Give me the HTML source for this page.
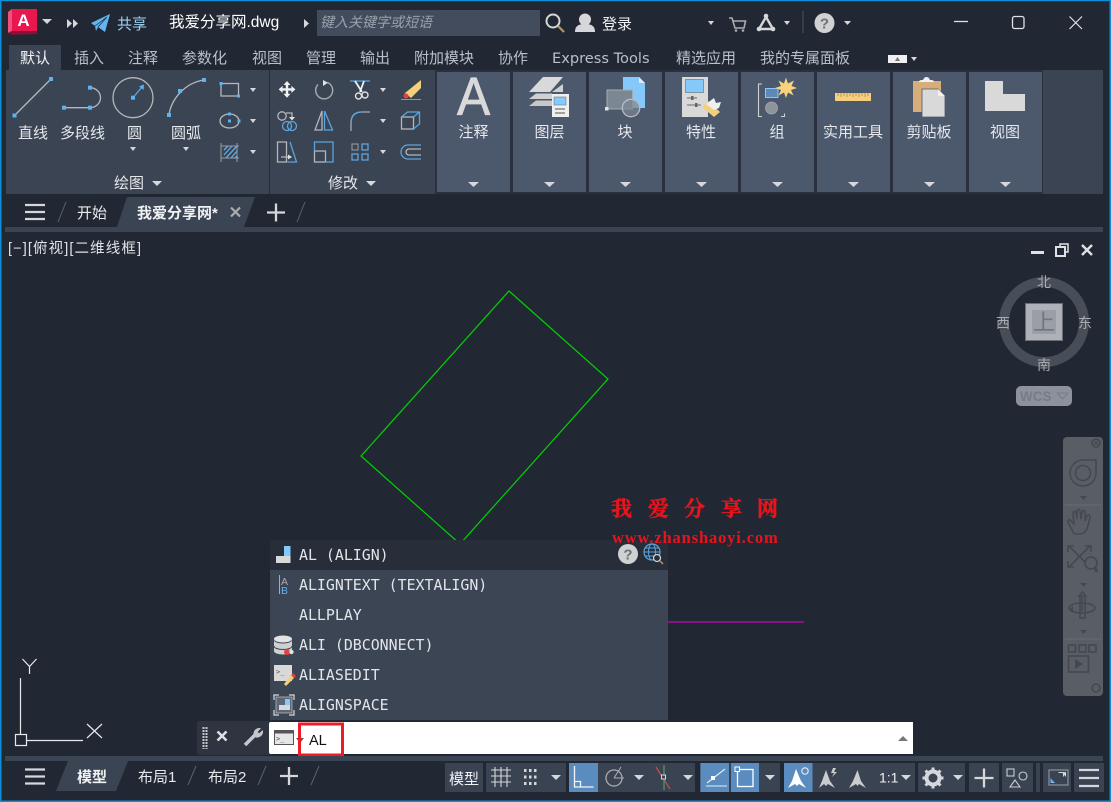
<!DOCTYPE html>
<html><head><meta charset="utf-8"><style>
html,body{margin:0;padding:0;background:#222833;width:1111px;height:802px;overflow:hidden}
svg{display:block;position:absolute;left:0;top:0}
text{font-family:"Liberation Sans","Noto Sans CJK SC",sans-serif;font-size:15px;fill:#e6e8ec}
.t{fill:#b9c0ca}
.m{font-family:"DejaVu Sans Mono","Liberation Mono",monospace;font-size:14.9px;fill:#e2e5ea}
.c{text-anchor:middle}
.g{fill:none;stroke:#b5b7ba;stroke-width:1.3}
.b{fill:none;stroke:#5aa5e0;stroke-width:1.3}
.s{fill:#5ab4f0}
.tri{fill:#d5d7da}
.bb{fill:#4c586c}
.st{fill:#3a4352}
.on{fill:#5a8cc0}
.n{fill:none;stroke:#45494f;stroke-width:1.6}
.cmp{fill:#a8abb0;font-size:14px;text-anchor:middle}
</style></head><body>
<svg width="1111" height="802" viewBox="0 0 1111 802" xmlns="http://www.w3.org/2000/svg">
<rect width="1111" height="802" fill="#222833"/>

<!-- title bar -->
<polygon points="8,12 12,9 12,31 8,33" fill="#f0507c"/>
<polygon points="8,33 12,31 37,31 37,34 12,35" fill="#8a1036"/>
<rect x="12" y="9" width="25" height="22" fill="#e8174f"/>
<text x="23.500" y="26" class="c" style="font-size:17px;font-weight:bold;fill:#fff">A</text>
<polygon class="tri" points="42,19 52,19 47,24"/>
<polygon points="67,19 72,23.500 67,28" fill="#d5d7da"/><polygon points="73,19 78,23.500 73,28" fill="#d5d7da"/>
<polygon points="91,23 110,14 105,32 98,27 96,31 95,26" fill="#5fb6f0"/><path d="M95 26l12-9-9 10" fill="none" stroke="#222833" stroke-width=".7"/>
<text x="117" y="29" style="fill:#9fd0f0">共享</text>
<text x="169" y="27" style="fill:#fff;font-size:15.500px">我爱分享网.dwg</text>
<polygon points="304,19 309,23.500 304,28" fill="#d5d7da"/>
<rect x="317" y="10" width="223" height="26" fill="#434c5d"/>
<text x="320" y="27" style="font-style:italic;fill:#9aa1ac;font-size:14px">键入关键字或短语</text>
<circle cx="553" cy="21" r="6.500" fill="none" stroke="#d5d7da" stroke-width="2"/>
<line x1="558" y1="26" x2="564" y2="32" stroke="#b8935c" stroke-width="2.200"/>
<circle cx="585" cy="19.500" r="6" fill="#d5d7da"/><path d="M575 32c0-7 5-8 10-8s10 1 10 8z" fill="#d5d7da"/>
<text x="602" y="29" style="fill:#f0f1f3">登录</text>
<polygon class="tri" points="708,21 714,21 711,25"/>
<path d="M729 18h3l3 10h9l1.500-7h-12" fill="none" stroke="#a9acb0" stroke-width="1.600"/><circle cx="736" cy="30.500" r="1.300" fill="#a9acb0"/><circle cx="743" cy="30.500" r="1.300" fill="#a9acb0"/>
<path d="M766 17l-7 12h14z" fill="none" stroke="#d5d7da" stroke-width="2.400"/><circle cx="766" cy="16" r="2.300" fill="#d5d7da"/><circle cx="759" cy="29" r="2.300" fill="#d5d7da"/><circle cx="773" cy="29" r="2.300" fill="#d5d7da"/>
<polygon class="tri" points="784,21 790,21 787,25"/>
<line x1="803" y1="11" x2="803" y2="33" stroke="#4a5260"/>
<circle cx="824.500" cy="23" r="10" fill="#d0d1d3"/><text x="824.500" y="28.500" class="c" style="fill:#6c7078;font-size:15px;font-weight:bold">?</text>
<polygon class="tri" points="844,21 851,21 847.500,25"/>
<line x1="954" y1="21.500" x2="968" y2="21.500" stroke="#e0e1e3" stroke-width="1.300"/>
<rect x="1012.500" y="16.500" width="11.500" height="12" rx="2" fill="none" stroke="#e0e1e3" stroke-width="1.300"/>
<path d="M1069.500 16.500l12.500 12.500M1082 16.500l-12.500 12.500" stroke="#e0e1e3" stroke-width="1.200"/>

<!-- ribbon tabs -->
<rect x="9" y="45" width="52" height="25" fill="#3b4453"/>
<text x="20" y="63" style="fill:#f2f4f6">默认</text>
<text x="74" y="63" class="t">插入</text>
<text x="128" y="63" class="t">注释</text>
<text x="182" y="63" class="t">参数化</text>
<text x="252" y="63" class="t">视图</text>
<text x="306" y="63" class="t">管理</text>
<text x="360" y="63" class="t">输出</text>
<text x="414" y="63" class="t">附加模块</text>
<text x="498" y="63" class="t">协作</text>
<text x="552" y="63" class="t" style="font-family:'DejaVu Sans','Liberation Sans',sans-serif;font-size:14.600px">Express Tools</text>
<text x="676" y="63" class="t">精选应用</text>
<text x="760" y="63" class="t">我的专属面板</text>
<rect x="888" y="55" width="19" height="8" fill="#f0f0f2"/><polygon points="895,61 900,61 897.500,57" fill="#777"/>
<polygon class="tri" points="911,57 917,57 914,61"/>

<!-- ribbon body -->
<rect x="6" y="70" width="1097" height="124" fill="#3b4453"/>
<line x1="269.500" y1="70" x2="269.500" y2="194" stroke="#262c38"/>
<rect x="435" y="70" width="608" height="124" fill="#2a303e"/>
<rect class="bb" x="437" y="72" width="73" height="120"/>
<rect class="bb" x="513" y="72" width="73" height="120"/>
<rect class="bb" x="589" y="72" width="73" height="120"/>
<rect class="bb" x="665" y="72" width="73" height="120"/>
<rect class="bb" x="741" y="72" width="73" height="120"/>
<rect class="bb" x="817" y="72" width="73" height="120"/>
<rect class="bb" x="893" y="72" width="73" height="120"/>
<rect class="bb" x="969" y="72" width="73" height="120"/>

<!-- draw panel -->
<line x1="15" y1="115" x2="51" y2="79" class="g"/><rect class="s" x="12.500" y="113.500" width="4" height="4"/><rect class="s" x="49" y="77" width="4" height="4"/>
<path d="M64 107.700H90A10.500 10 0 0 0 90 87.700" class="g"/><rect class="s" x="62" y="105.700" width="4" height="4"/><rect class="s" x="88" y="105.700" width="4" height="4"/><rect class="s" x="88" y="85.700" width="4" height="4"/>
<circle cx="133" cy="97.700" r="20" class="g"/><line x1="133" y1="97.700" x2="142" y2="87" class="b" stroke-width="1.500"/><polygon class="s" points="144,84.500 143.500,90 139,86.500"/><rect class="s" x="131" y="95.700" width="4" height="4"/>
<path d="M169 115C171 100 184 83 204 80" class="g"/><rect class="s" x="167" y="113" width="4" height="4"/><rect class="s" x="178" y="89" width="4" height="4"/><rect class="s" x="202" y="78" width="4" height="4"/>
<rect x="221" y="83.500" width="17.500" height="12.500" class="g"/><rect class="s" x="219.500" y="82" width="3" height="3"/><rect class="s" x="237" y="94.500" width="3" height="3"/>
<polygon class="tri" points="250,88 256,88 253,92"/>
<ellipse cx="229.500" cy="121" rx="9.500" ry="7" class="g"/><rect class="s" x="228" y="119.500" width="3" height="3"/><rect class="s" x="228" y="112.500" width="3" height="3"/><rect class="s" x="237.500" y="119.500" width="3" height="3"/>
<polygon class="tri" points="250,119 256,119 253,123"/>
<path d="M221 143v19M237 143v19M221 146h18M221 158h18" stroke="#9a9da2" fill="none"/><path d="M224 150l4-4M224 155l8-9M226 158l11-12M231 158l6-7M235 158l2-2" stroke="#62ace6" stroke-width="1.300" fill="none"/>
<polygon class="tri" points="250,150 256,150 253,154"/>
<text x="18" y="138">直线</text><text x="60" y="138">多段线</text><text x="127" y="138">圆</text><text x="171" y="138">圆弧</text>
<polygon class="tri" points="130,147 136,147 133,151"/><polygon class="tri" points="183,147 189,147 186,151"/>
<text x="114" y="188">绘图</text><polygon class="tri" points="152,181 162,181 157,186"/>

<!-- modify panel -->
<path d="M287 81l3.500 4h-2.300v3.200h3.200v-2.300l4 3.500-4 3.500v-2.300h-3.200v3.200h2.300l-3.500 4-3.500-4h2.300v-3.200h-3.200v2.300l-4-3.500 4-3.500v2.300h3.200v-3.200h-2.300z" fill="#f0f1f3"/>
<path d="M327.500 82.500A8.500 8.500 0 1 1 318 84.500" fill="none" stroke="#a9acb0" stroke-width="1.400"/><polygon points="323,80 328,82.800 323,86" fill="#e0e1e3"/>
<line x1="350" y1="81" x2="370" y2="81" stroke="#5aa5e0" stroke-width="1.300"/><path d="M355 81l7 11M364 81l-4 11" stroke="#f0f1f3" stroke-width="1.800"/><circle cx="358.500" cy="96" r="3" fill="none" stroke="#e0e1e3" stroke-width="1.400"/><circle cx="365" cy="95" r="3" fill="none" stroke="#e0e1e3" stroke-width="1.400"/>
<polygon class="tri" points="380,88 386,88 383,92"/>
<polygon points="421,80 421,88 411,98 405,93" fill="#f4cf7c"/><polygon points="405,93 408,95.500 406,97 404,96" fill="#e8e8e8"/><circle cx="406" cy="96" r="2.500" fill="#e84040"/><line x1="401" y1="99.500" x2="421" y2="99.500" stroke="#5aa5e0"/>
<circle cx="282" cy="116" r="4.200" class="g"/><path d="M286 113h6v5" class="g"/><polygon points="289,117 295,117 292,120.500" fill="#e0e1e3"/><circle cx="287" cy="126" r="4.500" class="b" stroke-width="1.500"/><circle cx="292" cy="126" r="4.500" class="b" stroke-width="1.500"/>
<polygon points="322,111 322,130 315,130" class="g"/><polygon points="324.500,111 332.500,130 324.500,130" class="b"/>
<path d="M351 131v-8q0-11 11-11h8" fill="none" stroke="#a9acb0" stroke-width="1.300"/><path d="M351 122q1-10 11-10" class="b"/>
<polygon class="tri" points="380,119 386,119 383,123"/>
<rect x="401.500" y="117" width="12" height="12" class="g" stroke-width="1.600"/><path d="M401.500 117l6-5h12v12l-6 5M413.500 117l6-5" class="b"/>
<path d="M277.500 142h9v20h-9zM281 157h9" class="g"/><polygon points="288,154.500 292,157 288,159.500" fill="#e0e1e3"/><path d="M290 142l6.500 20h-9" class="b"/>
<rect x="314.500" y="151" width="11" height="11" class="g"/><path d="M314.500 151v-9h18.500v20h-8" class="b"/>
<rect x="352" y="144" width="6" height="6" fill="none" stroke="#8e9197" stroke-width="1.200"/><rect x="362" y="144" width="6" height="6" class="b"/><rect x="352" y="154" width="6" height="6" class="b"/><rect x="362" y="154" width="6" height="6" class="b"/>
<polygon class="tri" points="380,150 386,150 383,154"/>
<path d="M421 145h-13a7 7 0 0 0 0 14h13" class="b"/><path d="M421 149h-12a3 3 0 0 0 0 6h12" class="g"/>
<text x="328" y="188">修改</text><polygon class="tri" points="366,181 376,181 371,186"/>

<!-- big buttons -->
<text transform="translate(473.500,115) scale(.92,1)" class="c" style="font-size:54px;fill:#d9d9d9;stroke:#d9d9d9;stroke-width:.8">A</text>
<polygon points="529,92 543,77 563,77 550,92" fill="#d9d9d9"/><polygon points="529,99 536,93.500 552,93.500 552,99" fill="#d0d0d0"/><polygon points="529,106 536,100.500 552,100.500 552,106" fill="#c8c8c8"/><polygon points="552,92 563,84 563,92" fill="#d0d0d0"/>
<rect x="552" y="94" width="17" height="23" fill="#efefef"/><rect x="554" y="97" width="12" height="8" fill="#85c8fa" stroke="#6a7a8a" stroke-width=".6"/><path d="M555 109h10M555 113h10" stroke="#555"/>
<polygon points="623,77 639,77 645,83 645,108 623,108" fill="#85c8fa"/><polygon points="639,77 645,83 639,83" fill="#dcecf8"/>
<rect x="607" y="90" width="25.500" height="19" fill="#7c8794" stroke="#a6abb1"/><circle cx="631" cy="108" r="8.700" fill="#7c8794" fill-opacity=".7" stroke="#b8bbc0" stroke-width="1.300"/><rect x="605" y="107" width="3.500" height="3.500" fill="#e0e1e3"/>
<rect x="682" y="77" width="26" height="40" fill="#d9d9d9"/><rect x="685.500" y="79.500" width="18" height="13" fill="#85c8fa" stroke="#6a7a8a" stroke-width=".7"/><path d="M687 98h10M687 105h14" stroke="#666"/><rect x="691" y="96" width="2.500" height="4" fill="#666"/><rect x="695" y="103" width="2.500" height="4" fill="#666"/>
<polygon points="702,107 708,101 720,112 714,117" fill="#f4cf7c"/><polygon points="706,104 714,98 716,103 721,102 719,108 714,110" fill="#efefef"/>
<path d="M762 84h-3.500v32.500h3.500M781 116.500h3.500v-3" fill="none" stroke="#d0d1d3" stroke-width="1.100"/>
<rect x="765.500" y="88.500" width="12.500" height="9" fill="#5f88b5" stroke="#85c8fa"/>
<circle cx="771.500" cy="108" r="6" fill="#8e949c" stroke="#aab" stroke-width=".7"/>
<polygon points="786,77.500 788,83.500 794,80.500 791.500,86 797,88 791,90 793.500,95.500 788,92.500 786,98 784,92.500 778.500,95.500 781,90 775,88 781,86 778.500,80.500 784,83.500" fill="#f8d27c"/>
<rect x="835" y="93" width="36" height="8" fill="#f5cf7d"/><path d="M838 93v3M841 93v4M844 93v3M847 93v4M850 93v3M853 93v4M856 93v3M859 93v4M862 93v3M865 93v4M868 93v3" stroke="#a98a4a" stroke-width=".8"/>
<rect x="913" y="81" width="28" height="31" fill="#d7ae78"/><path d="M919 82q0-2 3-2h1q1-3 3.500-3t3.500 3h1q3 0 3 2z" fill="#f2f2f2"/><polygon points="922,89 938,89 945,96 945,117 922,117" fill="#d9d9d9" stroke="#4c586c" stroke-width=".8"/><polygon points="938,89 945,96 938,96" fill="#f2f2f2"/>
<polygon points="985,81 1003,81 1003,94 1025,94 1025,111 985,111" fill="#d9d9d9"/>
<text x="473.500" y="137" class="c">注释</text><text x="549.500" y="137" class="c">图层</text><text x="625" y="137" class="c">块</text><text x="701" y="137" class="c">特性</text><text x="777" y="137" class="c">组</text><text x="853" y="137" class="c">实用工具</text><text x="929" y="137" class="c">剪贴板</text><text x="1005" y="137" class="c">视图</text>
<polygon class="tri" points="468,182 479,182 473.500,187"/><polygon class="tri" points="544,182 555,182 549.500,187"/><polygon class="tri" points="620,182 631,182 625.500,187"/><polygon class="tri" points="696,182 707,182 701.500,187"/><polygon class="tri" points="772,182 783,182 777.500,187"/><polygon class="tri" points="848,182 859,182 853.500,187"/><polygon class="tri" points="924,182 935,182 929.500,187"/><polygon class="tri" points="1000,182 1011,182 1005.500,187"/>

<!-- doc tabs -->
<path d="M25 205h20M25 212h20M25 219h20" stroke="#d5d7da" stroke-width="2.300"/>
<line x1="58" y1="222" x2="66" y2="202" stroke="#5a6270"/>
<text x="77" y="218">开始</text>
<polygon points="127,197 255,197 244,227 117,227" fill="#3b4453"/>
<text x="137" y="218" style="font-weight:bold;fill:#f0f1f3">我爱分享网*</text>
<path d="M231 207.500l9 9M240 207.500l-9 9" stroke="#a9acb0" stroke-width="2.200"/>
<path d="M267 212.500h18M276 203.500v18" stroke="#d5d7da" stroke-width="2.300"/>
<line x1="297" y1="222" x2="305" y2="202" stroke="#5a6270"/>
<rect x="5" y="227" width="1098" height="5" fill="#3b4453"/>

<!-- viewport label -->
<text x="8" y="253" textLength="133" lengthAdjust="spacing" style="font-size:14.500px;fill:#dfe1e5">[−][俯视][二维线框]</text>
<rect x="1031" y="251" width="13" height="3" fill="#e0e1e3"/>
<rect x="1056" y="247" width="9" height="9" fill="none" stroke="#e0e1e3" stroke-width="2"/><path d="M1060 246v-2h8v8h-2" fill="none" stroke="#e0e1e3" stroke-width="1.500"/>
<path d="M1082 245l10 10M1092 245l-10 10" stroke="#e0e1e3" stroke-width="2.400"/>

<!-- compass -->
<circle cx="1044" cy="322" r="40" fill="none" stroke="#474e58" stroke-width="10"/>
<rect x="1025.500" y="303.500" width="37" height="37" fill="#aeb2b8" stroke="#6a6f76"/>
<rect x="1032" y="310" width="24" height="24" fill="#9a9ea6"/>
<text x="1044" y="330" class="c" style="font-size:22px;fill:#71757c">上</text>
<text x="1044" y="287" class="cmp">北</text><text x="1044" y="370" class="cmp">南</text><text x="1003" y="328" class="cmp">西</text><text x="1085" y="328" class="cmp">东</text>
<rect x="1016" y="386" width="56" height="20" rx="5" fill="#8d919d"/>
<text x="1020" y="401" style="font-size:13.500px;font-weight:bold;fill:#777b87">WCS</text>
<polygon points="1057,393 1068,393 1062.500,399" fill="none" stroke="#777b87"/>

<!-- drawing -->
<polygon points="361,456 509,291 608,379 460,544" fill="none" stroke="#00d400" stroke-width="1.200"/>
<line x1="660" y1="622" x2="804" y2="622" stroke="#a40ea4" stroke-width="1.400"/>

<!-- nav bar -->
<rect x="1063" y="437" width="40" height="259" rx="4" fill="#595e65"/>
<circle cx="1096" cy="443" r="4" class="n" stroke-width="1.200"/><path d="M1094 441l4 4M1098 441l-4 4" stroke="#45494f"/>
<path d="M1083 460h13v14a13 13 0 1 1-13-14z" class="n"/><circle cx="1083" cy="473" r="7.500" class="n"/>
<polygon points="1080,496 1087,496 1083.500,500" fill="#45494f"/>
<line x1="1065" y1="505" x2="1101" y2="505" stroke="#666b72"/>
<path d="M1072 530l-4-8c-1-2 2-3 3-1l3 3-1-11c0-2 3-2 3 0l1 6 0-8c0-2 3-2 3 0l1 8 1-7c0-2 3-2 3 0l0 9 2-5c1-2 3-1 3 1l-2 9c-1 4-4 8-8 8h-4c-2 0-3-1-4-4z" class="n"/>
<path d="M1069 546l21 21M1090 546l-21 21M1068 552v-6h6M1091 552v-6h-6M1068 561v6h6" class="n"/><circle cx="1091" cy="563" r="6" fill="#595e65" stroke="#45494f" stroke-width="1.600"/><line x1="1095" y1="567" x2="1097" y2="572" stroke="#45494f" stroke-width="3"/>
<polygon points="1080,583 1087,583 1083.500,587" fill="#45494f"/>
<path d="M1082 611v-15h-3l3.500-4 3.500 4h-3M1085 596v22h-5v-22" class="n"/><ellipse cx="1082" cy="608" rx="13" ry="5" class="n"/><polygon points="1073,606 1073,612 1070,609" fill="#45494f"/>
<polygon points="1080,630 1087,630 1083.500,634" fill="#45494f"/>
<line x1="1065" y1="639" x2="1101" y2="639" stroke="#666b72"/>
<rect x="1068.500" y="645" width="7" height="7" class="n"/><rect x="1079" y="645" width="7" height="7" class="n"/><rect x="1089" y="645" width="7" height="7" class="n"/>
<rect x="1068.500" y="656" width="20" height="16" class="n"/><polygon points="1075,659 1075,669 1083,664" fill="#45494f"/>
<circle cx="1096" cy="688" r="4" class="n" stroke-width="1.200"/>

<!-- autocomplete -->
<rect x="270" y="540" width="398" height="30" fill="#272d39"/>
<rect x="270" y="570" width="398" height="150" fill="#3c4553"/>
<text x="299" y="560" class="m">AL (ALIGN)</text>
<text x="299" y="590" class="m">ALIGNTEXT (TEXTALIGN)</text>
<text x="299" y="620" class="m">ALLPLAY</text>
<text x="299" y="650" class="m">ALI (DBCONNECT)</text>
<text x="299" y="680" class="m">ALIASEDIT</text>
<text x="299" y="710" class="m">ALIGNSPACE</text>
<rect x="284" y="546" width="6.500" height="10" fill="#85c8fa"/><rect x="276" y="556" width="14.500" height="7" fill="#d9d9d9"/>
<circle cx="628" cy="554" r="10" fill="#d0d1d3"/><text x="628" y="559.500" class="c" style="font-size:15px;font-weight:bold;fill:#6c7078">?</text>
<circle cx="652" cy="552" r="8" fill="none" stroke="#5aa5e0" stroke-width="1.200"/><ellipse cx="652" cy="552" rx="3.500" ry="8" fill="none" stroke="#5aa5e0"/><path d="M644 552h16M645.500 548h13M645.500 556h13" stroke="#5aa5e0"/><circle cx="657" cy="558" r="3.500" fill="#272d39" stroke="#d0d1d3" stroke-width="1.300"/><line x1="660" y1="561" x2="663" y2="564" stroke="#b8935c" stroke-width="1.500"/>
<line x1="279.500" y1="575" x2="279.500" y2="594" stroke="#a9acb0"/><text x="281" y="585" style="font-size:10.500px;fill:#a9acb0">A</text><text x="281" y="594" style="font-size:10.500px;fill:#5ab4f0">B</text>
<ellipse cx="283" cy="639" rx="9" ry="3.500" fill="#e4e4e4"/><path d="M274 640v11c0 2 4 3.500 9 3.500s9-1.500 9-3.500v-11c0 2-4 3.500-9 3.500s-9-1.500-9-3.500z" fill="#d0d0d0"/><path d="M274 646c0 2 4 3.500 9 3.500s9-1.500 9-3.500" fill="none" stroke="#3c4553"/><circle cx="287" cy="652" r="3" fill="#e84040"/><circle cx="291.500" cy="652" r="2.200" fill="#e0e1e3"/>
<rect x="274" y="665" width="18" height="16" fill="#d9d9d9"/><text x="276" y="674" style="font-family:'DejaVu Sans Mono',monospace;font-size:7px;fill:#555">&gt;_</text><polygon points="284,684 291,675 294,678 286,686" fill="#f4cf7c"/><polygon points="291,675 293,673 296,676 294,678" fill="#e84040"/>
<rect x="276" y="697" width="16" height="16" fill="#5c6676" stroke="#d9d9d9" stroke-width=".6"/><rect x="285" y="699" width="5" height="6" fill="#85c8fa"/><rect x="279" y="705" width="11" height="5" fill="#d9d9d9"/><path d="M274 700v-5h5M289 695h5v5M274 710v5h5M289 715h5v-5" fill="none" stroke="#d9d9d9" stroke-width="1.200"/>

<!-- watermark -->
<text x="611 648 684 721 757" y="516" style="font-family:'Noto Serif CJK SC',serif;font-weight:bold;font-size:21px;fill:#e8141c;stroke:#e8141c;stroke-width:.5">我爱分享网</text>
<text x="612" y="543" style="font-family:'Liberation Serif',serif;font-weight:bold;font-size:16.500px;letter-spacing:.85px;fill:#e8141c">www.zhanshaoyi.com</text>

<!-- command line -->
<rect x="197" y="721" width="76" height="34" rx="3" fill="#2e3541"/>
<path d="M203.500 727v22M206.500 727v22" stroke="#c5c7ca" stroke-width="2" stroke-dasharray="2 1"/>
<path d="M217.500 731.500l9 9M226.500 731.500l-9 9" stroke="#e0e1e3" stroke-width="2.500"/>
<path d="M245 745l11-11" stroke="#c5c7ca" stroke-width="3.500"/><path d="M254 735a5.500 5.500 0 0 1 6-6.500l-3 3.500 2 2 3.500-3a5.500 5.500 0 0 1-6.500 6z" fill="#c5c7ca" stroke="#c5c7ca"/>
<path d="M271 722h642v32H271q-2 0-2-2v-28q0-2 2-2z" fill="#fff"/>
<rect x="274.500" y="730.500" width="19" height="14" fill="#e6e6e6" stroke="#555"/><rect x="274.500" y="730.500" width="19" height="3" fill="#555"/><text x="276" y="741" style="font-family:'DejaVu Sans Mono',monospace;font-size:7px;fill:#444">&gt;_</text>
<polygon points="296,738 304,738 300,743" fill="#555"/>
<rect x="299.500" y="724" width="43" height="31" fill="none" stroke="#ed1c24" stroke-width="3"/>
<text x="309" y="745" style="fill:#111;font-size:14.500px">AL</text>
<polygon points="898,741 908,741 903,736" fill="#777"/>

<!-- UCS -->
<path d="M20.500 734V678M26.500 740.500H83" stroke="#e6e8ec" stroke-width="1.200" fill="none"/>
<rect x="15.500" y="734.500" width="11" height="11" fill="none" stroke="#e6e8ec" stroke-width="1.200"/>
<path d="M87 724l15 14M102 724l-15 14M22.500 659l7 7.500 7-7.500M29.500 666.500V674" stroke="#e6e8ec" stroke-width="1.200" fill="none"/>

<!-- status bar -->
<rect x="5" y="756" width="1098" height="5" fill="#3b4453"/>
<path d="M25 769.500h20M25 776.500h20M25 783.500h20" stroke="#d5d7da" stroke-width="2.300"/>
<polygon points="68,761 128,761 116,791 56,791" fill="#3b4453"/>
<text x="77" y="782" style="font-weight:bold;fill:#f0f1f3">模型</text>
<text x="138" y="782">布局1</text><line x1="188" y1="785" x2="196" y2="766" stroke="#5a6270"/>
<text x="208" y="782">布局2</text><line x1="258" y1="785" x2="266" y2="766" stroke="#5a6270"/>
<path d="M280 776h18M289 767v18" stroke="#d5d7da" stroke-width="2.300"/>
<line x1="311" y1="785" x2="319" y2="766" stroke="#5a6270"/>

<rect class="st" x="445" y="763" width="38" height="29"/>
<rect class="st" x="486" y="763" width="80" height="29"/>
<rect class="st" x="569" y="763" width="126" height="29"/>
<rect class="st" x="700" y="763" width="80" height="29"/>
<rect class="st" x="784" y="763" width="131" height="29"/>
<rect class="st" x="918" y="763" width="47" height="29"/>
<rect class="st" x="969" y="763" width="30" height="29"/>
<rect class="st" x="1002" y="763" width="31" height="29"/>
<rect class="st" x="1036" y="763" width="4" height="29"/>
<rect class="st" x="1043" y="763" width="28" height="29"/>
<rect class="st" x="1074" y="763" width="30" height="29"/>
<rect class="on" x="569" y="763" width="29" height="29"/>
<rect class="on" x="700.500" y="763" width="28.500" height="29"/>
<rect class="on" x="731" y="763" width="28" height="29"/>
<rect class="on" x="784" y="763" width="28.500" height="29"/>

<text x="449" y="784" style="fill:#f0f1f3">模型</text>
<path d="M491 770h20M491 776h20M491 782h20M495 767v20M501 767v20M507 767v20" stroke="#d5d7da" stroke-width="1.100"/>
<path d="M524 770.500h2.500M529 770.500h2.500M534 770.500h2.500M524 777h2.500M529 777h2.500M534 777h2.500M524 783.500h2.500M529 783.500h2.500M534 783.500h2.500" stroke="#d5d7da" stroke-width="3"/>
<polygon class="tri" points="551,775 561,775 556,780"/>
<path d="M574.500 766v21h19M574.500 781.500h6v5.500" fill="none" stroke="#f2f4f6" stroke-width="1.300"/>
<circle cx="614" cy="778" r="8" fill="none" stroke="#a9acb0" stroke-width="1.300"/><path d="M614 778h10M614 778l7-11" stroke="#a9acb0" stroke-width="1.100"/>
<polygon class="tri" points="634,775 644,775 639,780"/>
<path d="M656 767l14 22" stroke="#c05050" stroke-width="1.200"/><line x1="664" y1="765" x2="664" y2="790" stroke="#50a060" stroke-width="1.200"/><rect x="661.500" y="775" width="4" height="4" fill="#3a4352" stroke="#d5d7da"/>
<polygon class="tri" points="683,775 693,775 688,780"/>
<path d="M706 786h21" stroke="#a8c4de" stroke-width="1.800"/><path d="M707 783l18-14" stroke="#e8eaee" stroke-width="1.200"/><rect x="711" y="776" width="4" height="4" fill="#fff"/>
<rect x="737.500" y="769.500" width="15.500" height="17" fill="none" stroke="#fff" stroke-width="1.300"/><rect x="735" y="767" width="4.500" height="4.500" fill="#5a8cc0" stroke="#fff"/>
<polygon class="tri" points="765,775 775,775 770,780"/>
<polygon points="796,769 801,781 806,788 799,784 797,786 795,784 788,788 792,781" fill="#fff"/><circle cx="805" cy="771" r="3.200" fill="none" stroke="#e8eaee" stroke-width="1.200"/>
<polygon points="826,770 830,781 835,788 828,784 826,786 824,784 819,788 822,781" fill="#c9cbce"/><polygon points="833,768 836,768 834,772 837,772 832,777 834,773 831,773" fill="#c9cbce"/>
<polygon points="857.500,770 861,781 866,788 859,784 857.500,786 856,784 849,788 853,781" fill="#c9cbce"/>
<text x="879" y="782.500" style="fill:#f0f1f3;font-size:14px">1:1</text>
<polygon class="tri" points="901,775 911,775 906,780"/>
<circle cx="933" cy="778" r="6.500" fill="none" stroke="#d5d7da" stroke-width="4"/><path d="M933 767.500v3M933 785.500v3M922.500 778h3M940.500 778h3M925.500 770.500l2.200 2.200M938.300 783.300l2.200 2.200M925.500 785.500l2.200-2.200M938.300 772.700l2.200-2.200" stroke="#d5d7da" stroke-width="3"/>
<polygon class="tri" points="953,775 963,775 958,780"/>
<path d="M974.500 778h19M984 768.500v19" stroke="#d5d7da" stroke-width="2.300"/>
<rect x="1007" y="769" width="7" height="7" fill="none" stroke="#c9cbce" stroke-width="1.100"/><circle cx="1023" cy="776" r="4" fill="none" stroke="#c9cbce" stroke-width="1.100"/><polygon points="1015,780 1020,787 1010,787" fill="none" stroke="#c9cbce" stroke-width="1.100"/>
<rect x="1049" y="770" width="19" height="15" fill="none" stroke="#8e9197" stroke-width="1.200"/><path d="M1058.500 772.500h5v4M1051.500 782.500h3" stroke="#d5d7da" fill="none"/><polygon points="1050.500,778 1054.500,782.500 1050.500,783" fill="#5ab4f0"/><polygon points="1066,772 1066,777 1062,772.500" fill="#d5d7da"/>
<path d="M1079 770h20M1079 778h20M1079 786h20" stroke="#d5d7da" stroke-width="2.300"/>

<!-- window border -->
<rect x="0" y="0" width="1111" height="1.200" fill="#0a8fd8"/>
<rect x="0" y="0" width="1.500" height="802" fill="#0a8fd8"/>
<rect x="1109.500" y="0" width="1.500" height="802" fill="#0a8fd8"/>
<rect x="0" y="800.500" width="1111" height="1.500" fill="#0a8fd8"/>
</svg>
</body></html>
